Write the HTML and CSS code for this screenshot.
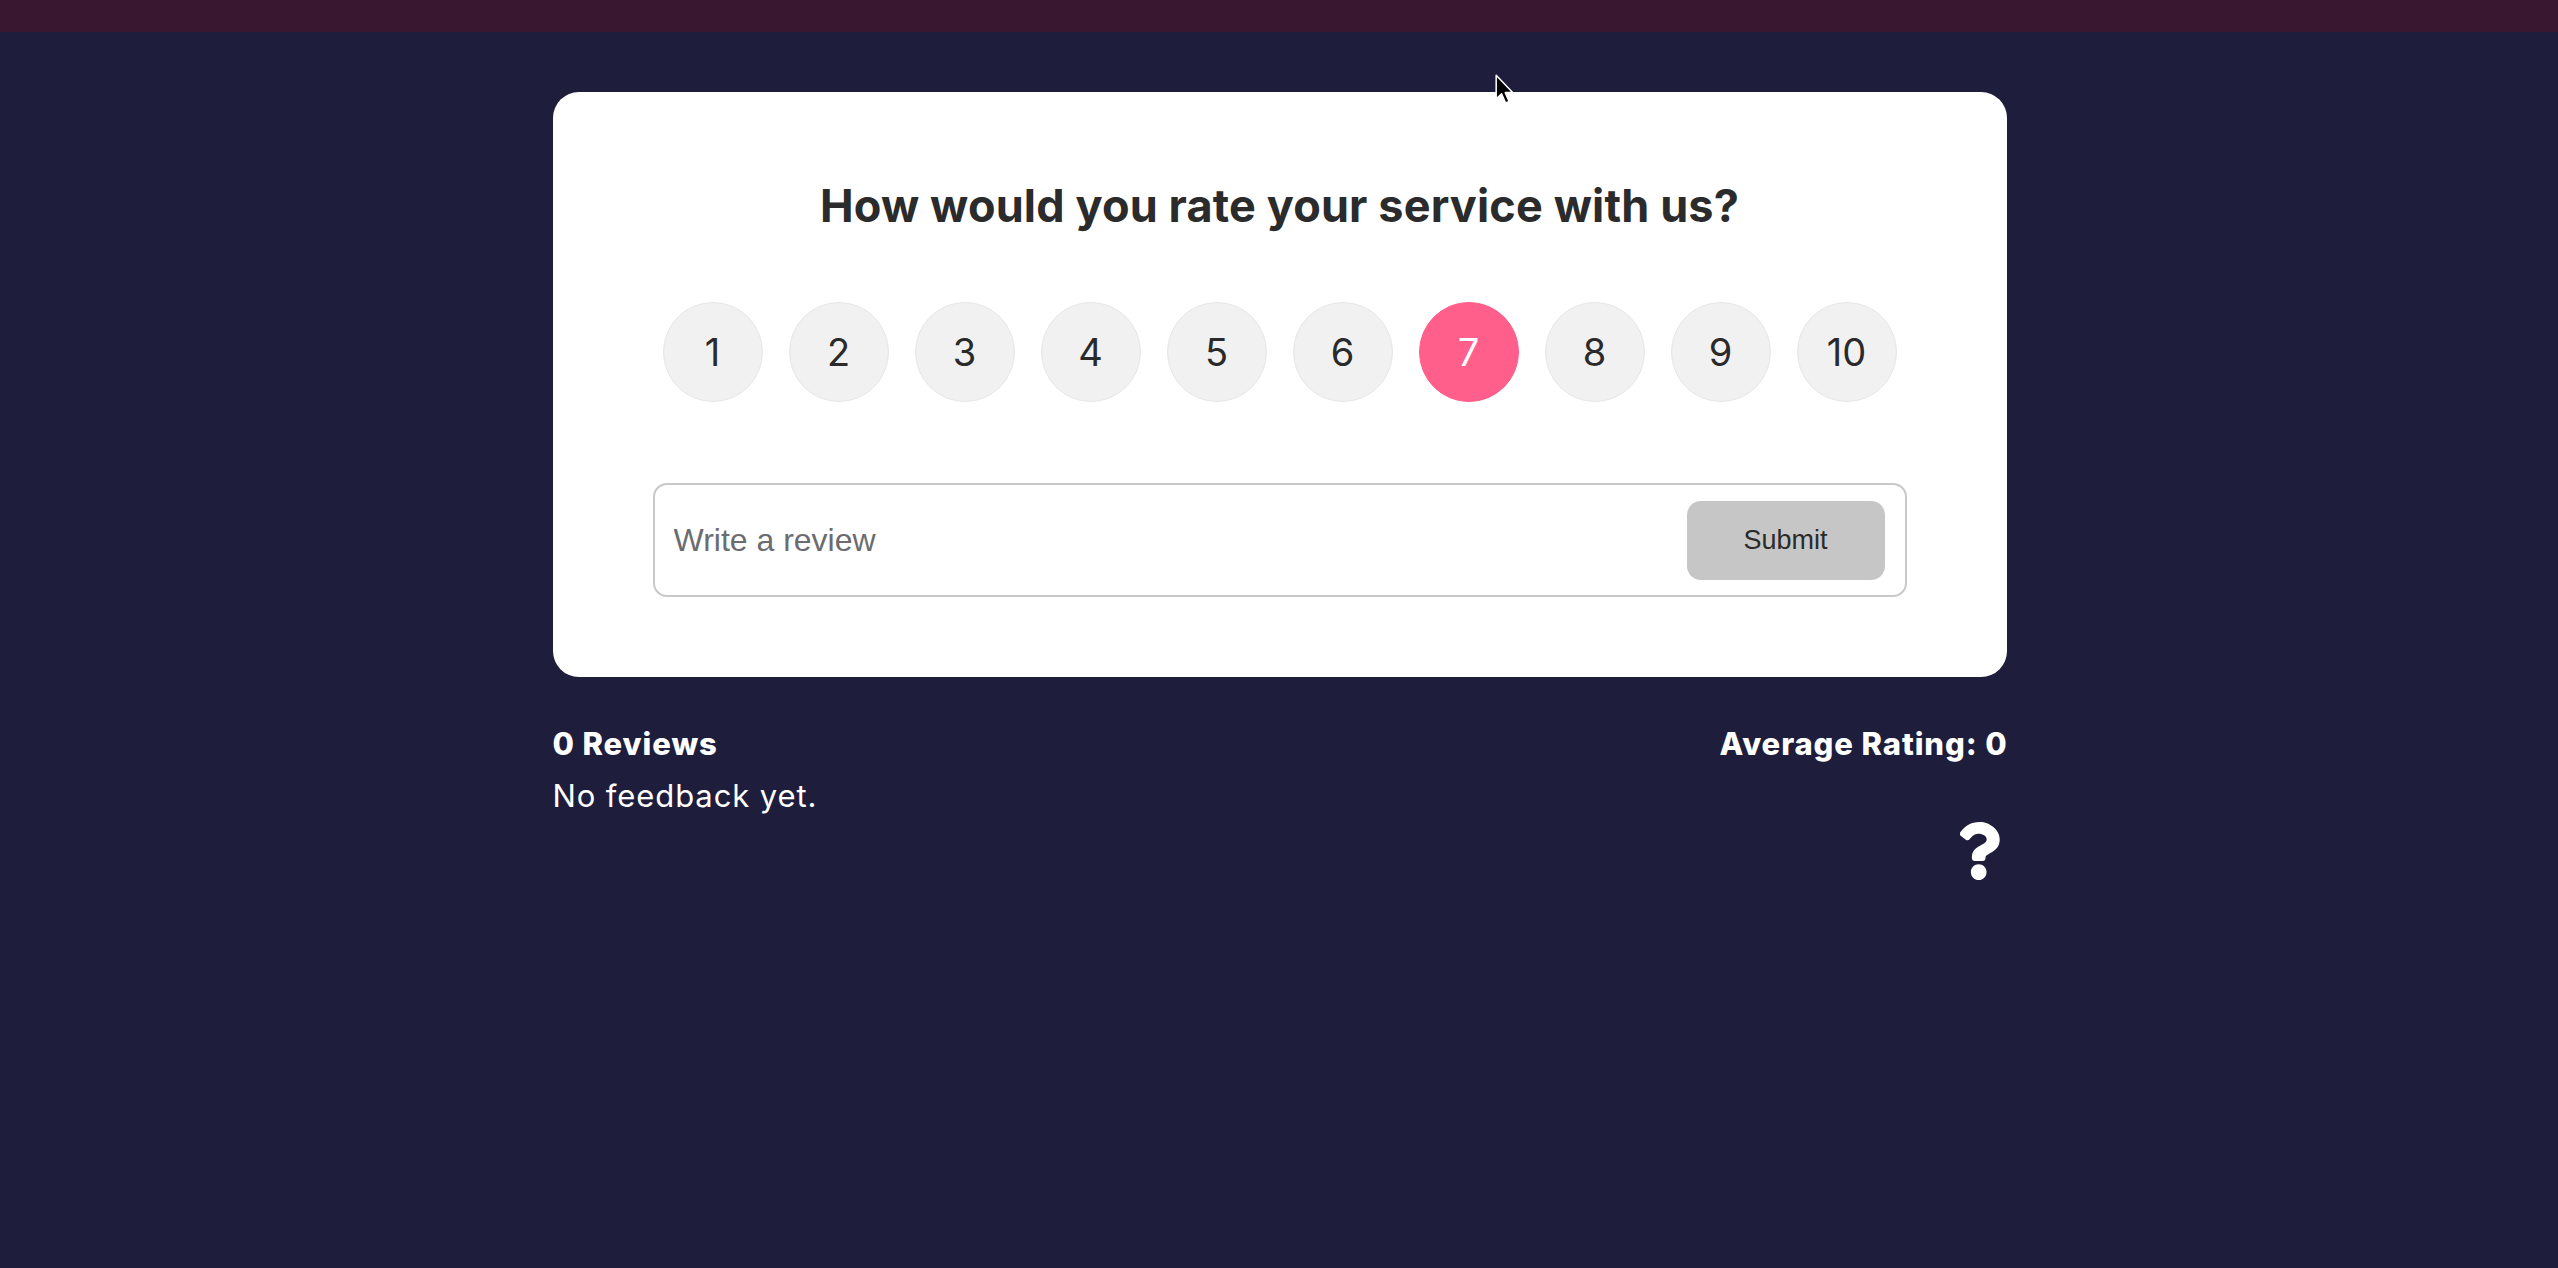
FILE: index.html
```html
<!DOCTYPE html>
<html lang="en">
<head>
<meta charset="utf-8">
<title>Feedback</title>
<link rel="stylesheet" href="styles.css">
</head>
<body>
<div class="topbar"></div>
<main class="main">
  <section class="card">
    <h1 class="title">How would you rate your service with us?</h1>
    <ul class="ratings">
      <li class="rate">1</li>
      <li class="rate">2</li>
      <li class="rate">3</li>
      <li class="rate">4</li>
      <li class="rate">5</li>
      <li class="rate">6</li>
      <li class="rate selected">7</li>
      <li class="rate">8</li>
      <li class="rate">9</li>
      <li class="rate">10</li>
    </ul>
    <form class="review">
      <input class="review-input" type="text" placeholder="Write a review">
      <button class="submit" type="button">Submit</button>
    </form>
  </section>
  <section class="stats">
    <div class="stats-left">
      <div class="stat-title">0 Reviews</div>
      <div class="empty">No feedback yet.</div>
    </div>
    <div class="stats-right">
      <div class="stat-title">Average Rating: 0</div>
      <svg class="help" viewBox="29 0 349 512" width="40" height="58" aria-hidden="true"><path fill="#ffffff" d="M202.021 0C122.202 0 70.503 32.703 29.914 91.026c-7.363 10.58-5.093 25.086 5.178 32.874l43.138 32.709c10.373 7.865 25.132 6.026 33.253-4.148 25.049-31.381 43.63-49.449 82.757-49.449 30.764 0 68.816 19.799 68.816 49.631 0 22.552-18.617 34.134-48.993 51.164-35.423 19.86-82.299 44.576-82.299 106.405V320c0 13.255 10.745 24 24 24h72.471c13.255 0 24-10.745 24-24v-5.773c0-42.86 125.268-44.645 125.268-160.627C377.504 66.256 286.902 0 202.021 0zM192 373.459c-38.196 0-69.271 31.075-69.271 69.271 0 38.195 31.075 69.27 69.271 69.27s69.271-31.075 69.271-69.271-31.075-69.27-69.271-69.27z"/></svg>
    </div>
  </section>
</main>
<svg class="cursor" viewBox="0 0 17 27" width="20" height="32" aria-hidden="true"><path d="M1 1 L1 21 L5.6 16.8 L9 24.6 L12 23.3 L8.7 15.7 L15 15.7 Z" fill="#000" stroke="#fff" stroke-width="1.3" stroke-linejoin="round"/></svg>
</body>
</html>
```
FILE: styles.css
```css
* { box-sizing: border-box; }
html, body { margin: 0; padding: 0; }
body {
  background: #1e1d3b;
  font-family: "Inter", "Noto Sans", sans-serif;
  min-height: 1268px;
}
.topbar {
  height: 32px;
  background: #3a1731;
}
.main {
  width: 1455px;
  margin: 60px auto 0;
  padding-left: 1px;
}
.card {
  background: #ffffff;
  border-radius: 26px;
  padding: 87px 100px 80px;
}
.title {
  margin: 0;
  text-align: center;
  font-size: 45px;
  line-height: 54px;
  font-weight: 700;
  letter-spacing: 0.15px;
  color: #2b2b2b;
}
.ratings {
  list-style: none;
  margin: 69px 0 0;
  padding: 0;
  display: flex;
  justify-content: center;
  gap: 26px;
}
.rate {
  width: 100px;
  height: 100px;
  border-radius: 50%;
  background: #f1f1f1;
  border: 1px solid #e7e7e7;
  display: flex;
  align-items: center;
  justify-content: center;
  font-size: 38px;
  font-weight: 400;
  color: #2a2a2a;
}
.rate.selected {
  background: #ff5f8a;
  border-color: #ff5f8a;
  color: #ffffff;
}
.review {
  margin: 81px 0 0;
  height: 114px;
  border: 2px solid #c8c8c8;
  border-radius: 14px;
  display: flex;
  align-items: center;
  padding: 0 20px 0 19px;
}
.review-input {
  flex: 1;
  border: none;
  outline: none;
  background: transparent;
  padding: 0;
  font-family: "Liberation Sans", Arial, sans-serif;
  font-size: 32px;
  color: #333;
}
.review-input::placeholder { color: #6b6b70; }
.submit {
  width: 198px;
  height: 79px;
  border: none;
  border-radius: 14px;
  background: #c6c6c6;
  font-family: "Liberation Sans", Arial, sans-serif;
  font-size: 27px;
  color: #2b2b2b;
  padding: 0;
}
.stats {
  margin-top: 47px;
  display: flex;
  justify-content: space-between;
  align-items: flex-start;
  color: #ffffff;
}
.stat-title {
  font-size: 31px;
  line-height: 40px;
  font-weight: 800;
  letter-spacing: 0.9px;
}
.empty {
  margin-top: 12px;
  font-size: 31px;
  line-height: 40px;
  font-weight: 400;
  letter-spacing: 0.9px;
}
.stats-right {
  display: flex;
  flex-direction: column;
  align-items: flex-end;
}
.stats-right .stat-title { margin-right: -1px; }
.help {
  display: block;
  margin-top: 58px;
  margin-right: 7px;
}
.cursor {
  position: absolute;
  left: 1495px;
  top: 74px;
}
```
